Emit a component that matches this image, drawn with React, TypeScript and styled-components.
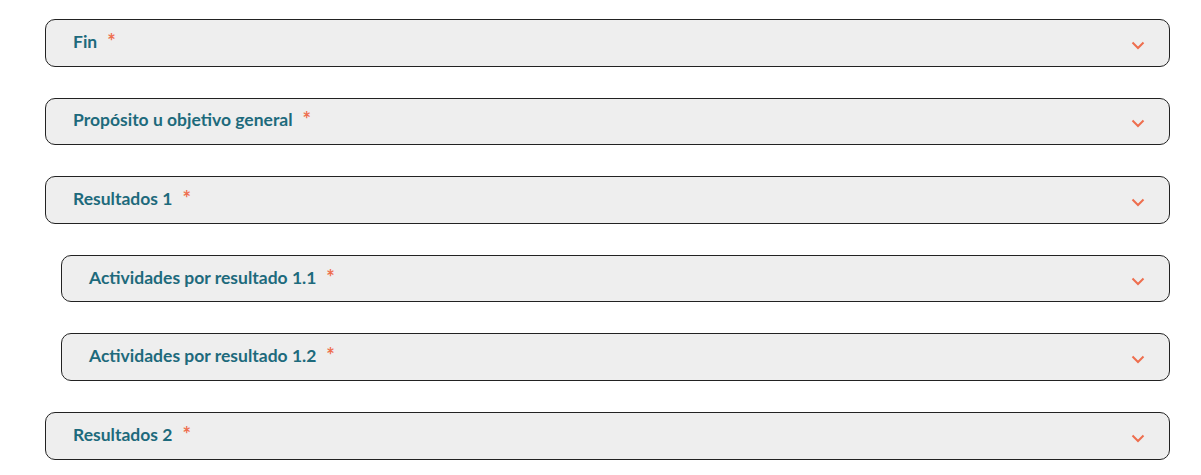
import React from "react";
import styled, { createGlobalStyle } from "styled-components";

const Global = createGlobalStyle`
  html, body { margin: 0; padding: 0; background: #ffffff; }
  body { font-family: Lato, "Open Sans", sans-serif; }
`;

const Page = styled.div`
  display: flex;
  flex-direction: column;
  gap: 31px;
  padding: 19px 31px 0 45px;
`;

const Panel = styled.div<{ $nested?: boolean }>`
  box-sizing: border-box;
  height: 47.6px;
  margin-left: ${(p) => (p.$nested ? "16px" : "0")};
  display: flex;
  align-items: center;
  justify-content: space-between;
  padding: 0 24px 0 27px;
  background: #eeeeee;
  border: 1px solid #222222;
  border-radius: 10px;
`;

const Title = styled.div`
  display: flex;
  align-items: center;
  font-family: Lato, sans-serif;
  font-weight: 700;
  font-size: 17.5px;
  line-height: 20px;
  margin-top: -2px;
  color: #1d6a7c;
`;

const Required = styled.span`
  color: #ee6e4e;
  font-size: 20px;
  font-weight: 700;
  margin-left: 10px;
  position: relative;
  top: -1px;
`;

const Chevron = styled.svg`
  width: 14px;
  height: 9px;
  margin-top: 5px;
  display: block;
`;

const items = [
  { label: "Fin", nested: false },
  { label: "Propósito u objetivo general", nested: false },
  { label: "Resultados 1", nested: false },
  { label: "Actividades por resultado 1.1", nested: true },
  { label: "Actividades por resultado 1.2", nested: true },
  { label: "Resultados 2", nested: false },
];

export default function App() {
  return (
    <>
      <Global />
      <Page>
        {items.map((it) => (
          <Panel key={it.label} $nested={it.nested}>
            <Title>
              {it.label}
              <Required>*</Required>
            </Title>
            <Chevron viewBox="0 0 14 9">
              <polyline
                points="1.5,1.5 7,7 12.5,1.5"
                fill="none"
                stroke="#ee6e4e"
                strokeWidth="2"
              />
            </Chevron>
          </Panel>
        ))}
      </Page>
    </>
  );
}
